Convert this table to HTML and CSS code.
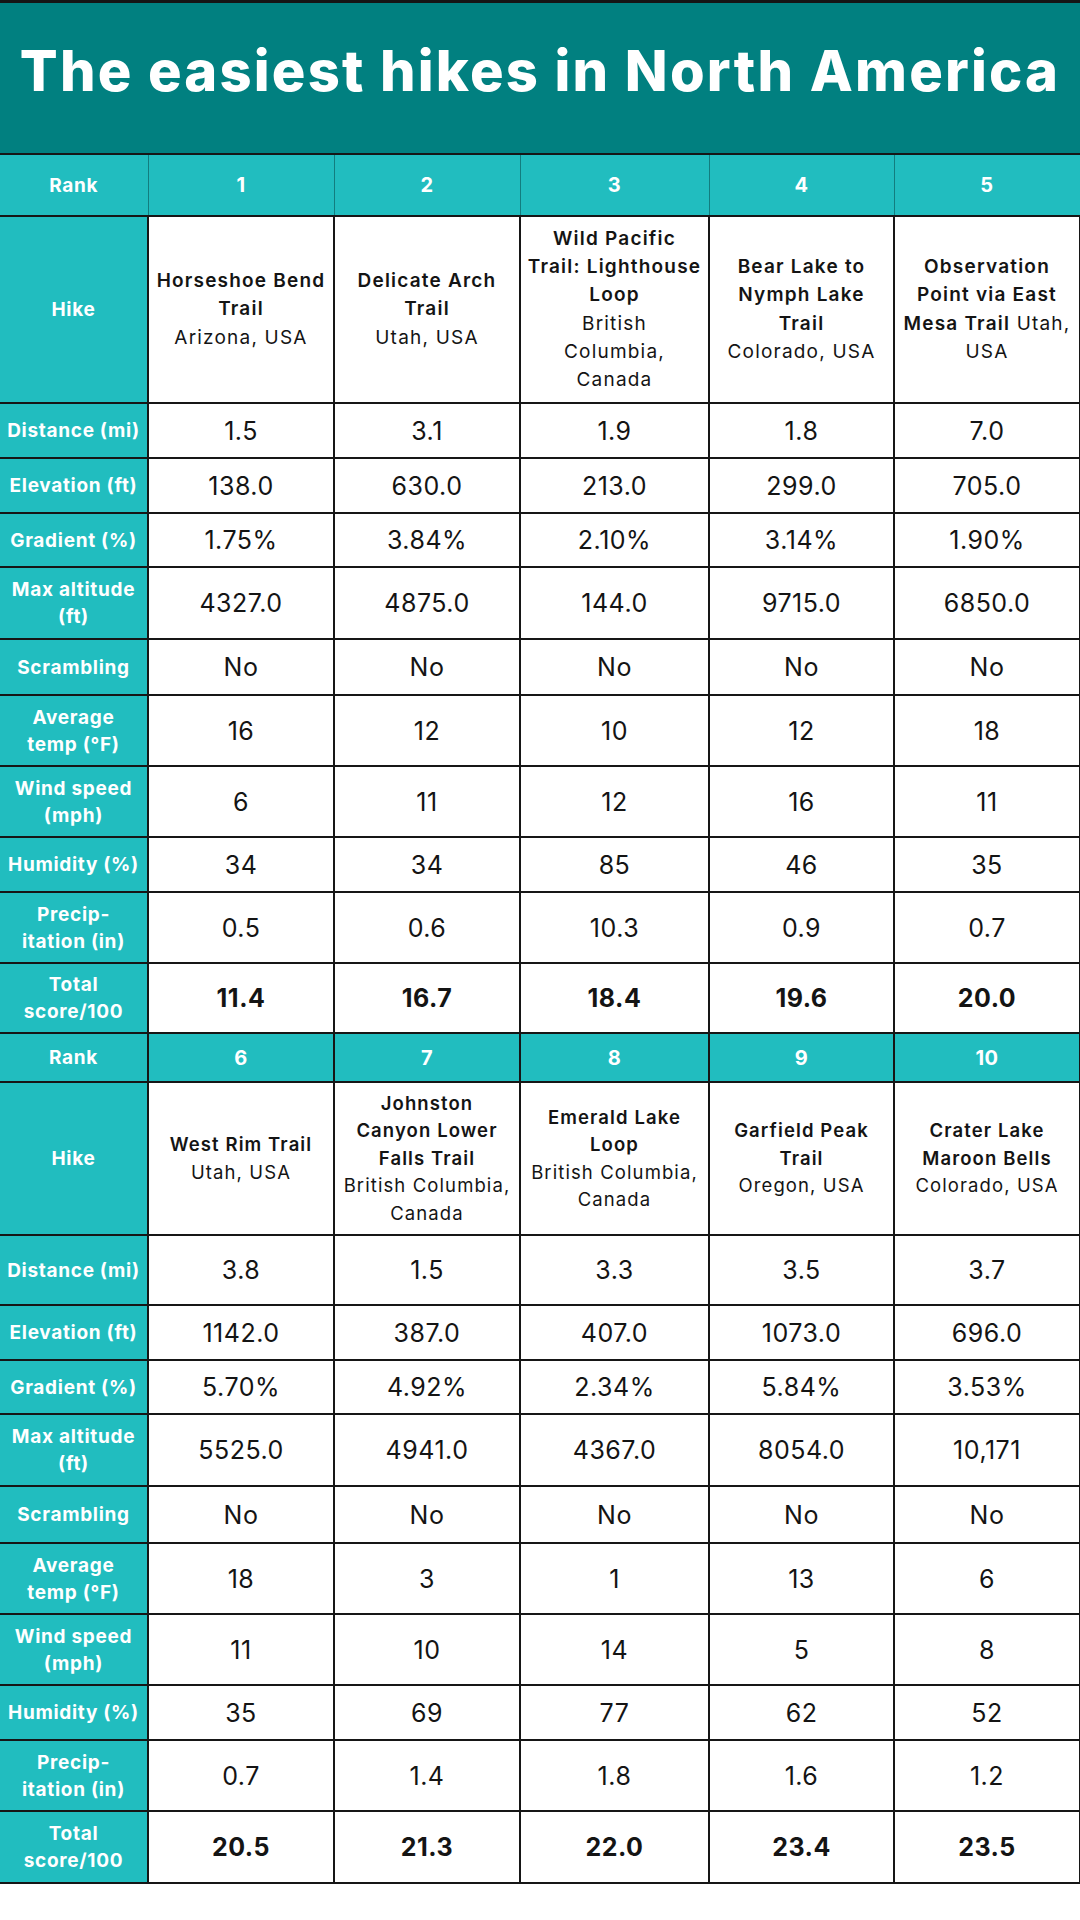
FILE: index.html
```html
<!DOCTYPE html>
<html lang="en">
<head>
<meta charset="utf-8">
<title>The easiest hikes in North America</title>
<link rel="stylesheet" href="styles.css">
</head>
<body>
<div class="page">
  <header class="banner">
    <h1 class="title">The easiest hikes in North America</h1>
  </header>
  <table class="hikes">
    <colgroup>
      <col class="c-label">
      <col class="c-data"><col class="c-data"><col class="c-wide"><col class="c-narrow"><col class="c-data">
    </colgroup>
    <tbody>
      <tr class="rank first h62">
        <th class="lbl">Rank</th><td>1</td><td>2</td><td>3</td><td>4</td><td>5</td>
      </tr>
      <tr class="hike h187">
        <th class="lbl">Hike</th>
        <td><b>Horseshoe Bend<br>Trail</b><br>Arizona, USA</td>
        <td><b>Delicate Arch<br>Trail</b><br>Utah, USA</td>
        <td><b>Wild Pacific<br>Trail: Lighthouse<br>Loop</b><br>British<br>Columbia,<br>Canada</td>
        <td><b>Bear Lake to<br>Nymph Lake<br>Trail</b><br>Colorado, USA</td>
        <td><b>Observation<br>Point via East<br>Mesa Trail</b> Utah,<br>USA</td>
      </tr>
      <tr class="h55"><th class="lbl">Distance (mi)</th><td>1.5</td><td>3.1</td><td>1.9</td><td>1.8</td><td>7.0</td></tr>
      <tr class="h55"><th class="lbl">Elevation (ft)</th><td>138.0</td><td>630.0</td><td>213.0</td><td>299.0</td><td>705.0</td></tr>
      <tr class="h54"><th class="lbl">Gradient (%)</th><td>1.75%</td><td>3.84%</td><td>2.10%</td><td>3.14%</td><td>1.90%</td></tr>
      <tr class="h72"><th class="lbl">Max altitude<br>(ft)</th><td>4327.0</td><td>4875.0</td><td>144.0</td><td>9715.0</td><td>6850.0</td></tr>
      <tr class="h56"><th class="lbl">Scrambling</th><td>No</td><td>No</td><td>No</td><td>No</td><td>No</td></tr>
      <tr class="h71"><th class="lbl">Average<br>temp (°F)</th><td>16</td><td>12</td><td>10</td><td>12</td><td>18</td></tr>
      <tr class="h71"><th class="lbl">Wind speed<br>(mph)</th><td>6</td><td>11</td><td>12</td><td>16</td><td>11</td></tr>
      <tr class="h55"><th class="lbl">Humidity (%)</th><td>34</td><td>34</td><td>85</td><td>46</td><td>35</td></tr>
      <tr class="h71"><th class="lbl">Precip-<br>itation (in)</th><td>0.5</td><td>0.6</td><td>10.3</td><td>0.9</td><td>0.7</td></tr>
      <tr class="total h70"><th class="lbl">Total<br>score/100</th><td>11.4</td><td>16.7</td><td>18.4</td><td>19.6</td><td>20.0</td></tr>

      <tr class="rank h49">
        <th class="lbl">Rank</th><td>6</td><td>7</td><td>8</td><td>9</td><td>10</td>
      </tr>
      <tr class="hike small h153">
        <th class="lbl">Hike</th>
        <td><b>West Rim Trail</b><br>Utah, USA</td>
        <td><b>Johnston<br>Canyon Lower<br>Falls Trail</b><br>British Columbia,<br>Canada</td>
        <td><b>Emerald Lake<br>Loop</b><br>British Columbia,<br>Canada</td>
        <td><b>Garfield Peak<br>Trail</b><br>Oregon, USA</td>
        <td><b>Crater Lake<br>Maroon Bells</b><br>Colorado, USA</td>
      </tr>
      <tr class="h70"><th class="lbl">Distance (mi)</th><td>3.8</td><td>1.5</td><td>3.3</td><td>3.5</td><td>3.7</td></tr>
      <tr class="h55"><th class="lbl">Elevation (ft)</th><td>1142.0</td><td>387.0</td><td>407.0</td><td>1073.0</td><td>696.0</td></tr>
      <tr class="h54"><th class="lbl">Gradient (%)</th><td>5.70%</td><td>4.92%</td><td>2.34%</td><td>5.84%</td><td>3.53%</td></tr>
      <tr class="h72"><th class="lbl">Max altitude<br>(ft)</th><td>5525.0</td><td>4941.0</td><td>4367.0</td><td>8054.0</td><td>10,171</td></tr>
      <tr class="h57"><th class="lbl">Scrambling</th><td>No</td><td>No</td><td>No</td><td>No</td><td>No</td></tr>
      <tr class="h71"><th class="lbl">Average<br>temp (°F)</th><td>18</td><td>3</td><td>1</td><td>13</td><td>6</td></tr>
      <tr class="h71"><th class="lbl">Wind speed<br>(mph)</th><td>11</td><td>10</td><td>14</td><td>5</td><td>8</td></tr>
      <tr class="h55"><th class="lbl">Humidity (%)</th><td>35</td><td>69</td><td>77</td><td>62</td><td>52</td></tr>
      <tr class="h71"><th class="lbl">Precip-<br>itation (in)</th><td>0.7</td><td>1.4</td><td>1.8</td><td>1.6</td><td>1.2</td></tr>
      <tr class="total h72"><th class="lbl">Total<br>score/100</th><td>20.5</td><td>21.3</td><td>22.0</td><td>23.4</td><td>23.5</td></tr>
    </tbody>
  </table>
</div>
</body>
</html>
```

FILE: styles.css
```css
* { box-sizing: border-box; }

html, body {
  margin: 0;
  padding: 0;
  background: #ffffff;
}

body {
  width: 1080px;
  height: 1920px;
  overflow: hidden;
  font-family: Inter, "Noto Sans", "Liberation Sans", sans-serif;
  color: #141414;
}

.page {
  width: 1080px;
}

.banner {
  height: 154px;
  background: #018080;
  border-top: 3px solid #151515;
  display: flex;
  align-items: flex-start;
  justify-content: center;
  padding-top: 33px;
}

.title {
  margin: 0;
  color: #ffffff;
  font-family: Inter, "Noto Sans", sans-serif;
  font-weight: 800;
  font-size: 56px;
  line-height: 70px;
  letter-spacing: 2.2px;
  white-space: nowrap;
}

.hikes {
  width: 1080px;
  border-collapse: collapse;
  table-layout: fixed;
  margin-top: -1px;
}

.c-label { width: 148px; }
.c-data { width: 186px; }
.c-wide { width: 189px; }
.c-narrow { width: 185px; }

.hikes th,
.hikes td {
  border: 2px solid #161616;
  padding: 0 2px;
  text-align: center;
  vertical-align: middle;
}

.hikes tr > :first-child { border-left: 0; }

.hikes td {
  font-size: 25px;
  font-weight: 400;
  line-height: 28px;
  letter-spacing: 0.5px;
  color: #141414;
  background: #ffffff;
}

.hikes th.lbl {
  background: #21bdbf;
  color: #ffffff;
  font-size: 19px;
  font-weight: 700;
  line-height: 27px;
  letter-spacing: 0.7px;
  white-space: nowrap;
}

.rank td {
  background: #21bdbf;
  color: #ffffff;
  font-size: 20px;
  font-weight: 700;
}

.rank.first th,
.rank.first td {
  border-left: 1px solid #127d7f;
  border-right: 1px solid #127d7f;
}
.rank.first th { border-left: 0; }

.hike td {
  font-size: 19px;
  line-height: 28.3px;
  letter-spacing: 1.2px;
  padding: 0 1px;
  white-space: nowrap;
}
.hike td b { font-weight: 600; }

.hike.small td {
  font-size: 18.5px;
  line-height: 27.5px;
  letter-spacing: 1.1px;
}

.total td {
  font-weight: 700;
}

.h49 { height: 49px; }
.h54 { height: 54px; }
.h55 { height: 55px; }
.h56 { height: 56px; }
.h57 { height: 57px; }
.h62 { height: 62px; }
.h70 { height: 70px; }
.h71 { height: 71px; }
.h72 { height: 72px; }
.h153 { height: 153px; }
.h187 { height: 187px; }
```
